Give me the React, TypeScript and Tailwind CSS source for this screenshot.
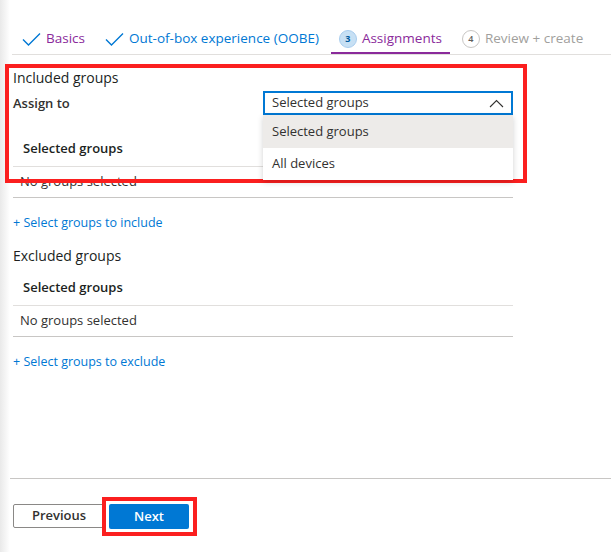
import { ReactNode } from "react";

function Check() {
  return (
    <svg width="19" height="14" viewBox="0 0 19 14" fill="none">
      <path d="M1 7.5 L6.5 13 L18 1.5" stroke="#0078d4" strokeWidth="1.4" />
    </svg>
  );
}

function Tab({ icon, label, color, active }: { icon: ReactNode; label: string; color: string; active?: boolean }) {
  return (
    <div
      className={
        "flex h-[29px] items-center px-[8px] " +
        (active ? "border-b-2 border-[#8a2a9b]" : "border-b-2 border-transparent")
      }
    >
      {icon}
      <span className={"ml-[5px] text-[13.5px] " + color}>{label}</span>
    </div>
  );
}

function GroupTable() {
  return (
    <div className="w-[500px]">
      <div className="flex h-[36px] items-center border-b border-[#e1dfdd] pl-[10px] text-[13px] font-semibold text-[#201f1e]">
        Selected groups
      </div>
      <div className="flex h-[31px] items-center border-b border-[#c8c6c4] pl-[7px] text-[13px] text-[#323130]">
        No groups selected
      </div>
    </div>
  );
}

export default function App() {
  return (
    <div
      className="relative flex h-[552px] w-[611px] flex-col overflow-hidden bg-white text-[#323130]"
      style={{ fontFamily: '"Open Sans", "Noto Sans", sans-serif' }}
    >
      {/* left pane shadow */}
      <div className="absolute left-0 top-0 bottom-0 w-[10px] bg-gradient-to-r from-[#e9e9e9] to-white" />

      {/* wizard tabs */}
      <div className="relative ml-[12px] flex h-[55px] items-end border-b border-[#e1dfdd] pl-[2px]">
        <div className="flex gap-[4px]">
          <Tab icon={<Check />} label="Basics" color="text-[#8a2a9b]" />
          <Tab icon={<Check />} label="Out-of-box experience (OOBE)" color="text-[#0078d4]" />
          <Tab
            active
            icon={
              <span className="flex h-[18px] w-[18px] items-center justify-center rounded-full border border-[#a9cdee] bg-[#c7e0f4] text-[9px] font-bold text-[#005a9e]">
                3
              </span>
            }
            label="Assignments"
            color="text-[#8a2a9b]"
          />
          <Tab
            icon={
              <span className="flex h-[18px] w-[18px] items-center justify-center rounded-full border border-[#c8c6c4] bg-white text-[9px] font-semibold text-[#605e5c]">
                4
              </span>
            }
            label="Review + create"
            color="text-[#a19f9d]"
          />
        </div>
      </div>

      {/* body */}
      <div className="relative flex-1 px-[13px]">
        <div className="mt-[13px] h-[20px] text-[14px] leading-[20px] text-[#201f1e]">Included groups</div>

        <div className="mt-[3px] flex items-start">
          <div className="w-[250px] pt-[3px] text-[13px] font-semibold text-[#323130]">Assign to</div>
          <div className="relative w-[250px]">
            <div className="flex h-[24px] items-center justify-between border-2 border-[#0078d4] pl-[7px] pr-[7px] text-[13px] text-[#323130]">
              <span>Selected groups</span>
              <svg width="15" height="9" viewBox="0 0 15 9" fill="none">
                <path d="M1 8 L7.5 1.5 L14 8" stroke="#323130" strokeWidth="1.1" />
              </svg>
            </div>
            <div className="absolute left-0 top-full z-10 w-[250px] bg-white text-[13px] text-[#323130] shadow-[0_2px_6px_rgba(0,0,0,0.18)]">
              <div className="flex h-[33px] items-center bg-[#edebe9] pl-[9px]">Selected groups</div>
              <div className="flex h-[32px] items-center pl-[9px]">All devices</div>
            </div>
          </div>
        </div>

        <div className="mt-[16px]">
          <GroupTable />
        </div>
        <div className="mt-[15px] h-[20px] text-[12.5px] leading-[20px] text-[#0078d4]">+ Select groups to include</div>

        <div className="mt-[13px] h-[20px] text-[14px] leading-[20px] text-[#201f1e]">Excluded groups</div>
        <div className="mt-[4px]">
          <GroupTable />
        </div>
        <div className="mt-[15px] h-[20px] text-[12.5px] leading-[20px] text-[#0078d4]">+ Select groups to exclude</div>
      </div>

      {/* footer */}
      <div className="h-[74px] border-t border-[#c8c6c4] pl-[13px] pt-[25px]">
        <div className="flex gap-[4px]">
          <button className="h-[24px] w-[92px] rounded-[2px] border border-[#8a8886] bg-white text-[13px] font-semibold text-[#323130]">
            Previous
          </button>
          <button className="h-[25px] w-[80px] rounded-[2px] bg-[#0078d4] text-[13px] font-semibold text-white">
            Next
          </button>
        </div>
      </div>

      {/* annotation boxes */}
      <div className="pointer-events-none absolute left-[5px] top-[64px] h-[119px] w-[522px] border-4 border-[#fb1f1f]" />
      <div className="pointer-events-none absolute left-[102px] top-[497px] h-[39px] w-[95px] border-4 border-[#fb1f1f]" />
    </div>
  );
}
